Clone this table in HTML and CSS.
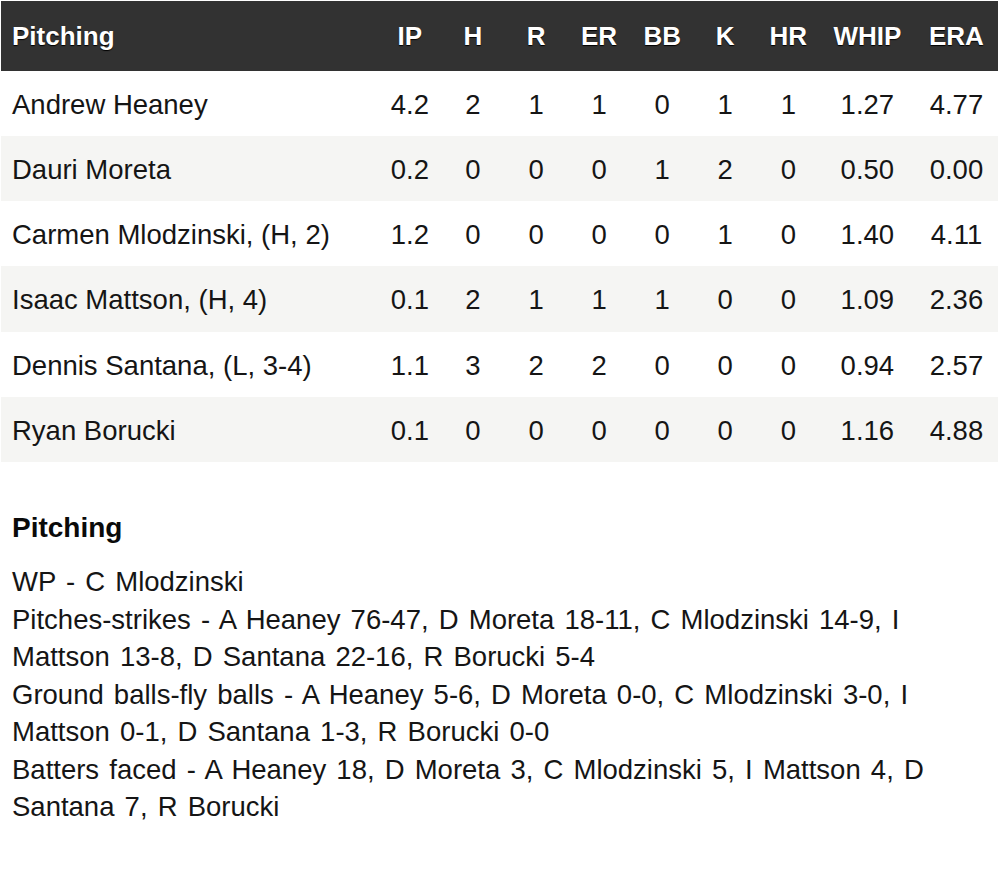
FILE: index.html
```html
<!DOCTYPE html>
<html>
<head>
<meta charset="utf-8">
<link rel="stylesheet" href="styles.css">
</head>
<body>
<div class="page">
  <table class="box">
    <colgroup>
      <col class="c-name"><col class="c-n"><col class="c-n"><col class="c-n"><col class="c-n"><col class="c-n"><col class="c-n"><col class="c-n"><col class="c-whip"><col class="c-era">
    </colgroup>
    <thead>
      <tr><th class="name">Pitching</th><th>IP</th><th>H</th><th>R</th><th>ER</th><th>BB</th><th>K</th><th>HR</th><th>WHIP</th><th>ERA</th></tr>
    </thead>
    <tbody>
      <tr><td class="name">Andrew Heaney</td><td>4.2</td><td>2</td><td>1</td><td>1</td><td>0</td><td>1</td><td>1</td><td>1.27</td><td>4.77</td></tr>
      <tr><td class="name">Dauri Moreta</td><td>0.2</td><td>0</td><td>0</td><td>0</td><td>1</td><td>2</td><td>0</td><td>0.50</td><td>0.00</td></tr>
      <tr><td class="name">Carmen Mlodzinski, (H, 2)</td><td>1.2</td><td>0</td><td>0</td><td>0</td><td>0</td><td>1</td><td>0</td><td>1.40</td><td>4.11</td></tr>
      <tr><td class="name">Isaac Mattson, (H, 4)</td><td>0.1</td><td>2</td><td>1</td><td>1</td><td>1</td><td>0</td><td>0</td><td>1.09</td><td>2.36</td></tr>
      <tr><td class="name">Dennis Santana, (L, 3-4)</td><td>1.1</td><td>3</td><td>2</td><td>2</td><td>0</td><td>0</td><td>0</td><td>0.94</td><td>2.57</td></tr>
      <tr><td class="name">Ryan Borucki</td><td>0.1</td><td>0</td><td>0</td><td>0</td><td>0</td><td>0</td><td>0</td><td>1.16</td><td>4.88</td></tr>
    </tbody>
  </table>
  <section class="notes">
    <h2 class="notes-title">Pitching</h2>
    <p class="notes-text">WP - C Mlodzinski<br>Pitches-strikes - A Heaney 76-47, D Moreta 18-11, C Mlodzinski 14-9, I Mattson 13-8, D Santana 22-16, R Borucki 5-4<br>Ground balls-fly balls - A Heaney 5-6, D Moreta 0-0, C Mlodzinski 3-0, I Mattson 0-1, D Santana 1-3, R Borucki 0-0<br>Batters faced - A Heaney 18, D Moreta 3, C Mlodzinski 5, I Mattson 4, D Santana 7, R Borucki</p>
  </section>
</div>
</body>
</html>
```

FILE: styles.css
```css
html, body {
  margin: 0;
  padding: 0;
  background: #ffffff;
}
body {
  font-family: "Liberation Sans", Arial, Helvetica, sans-serif;
  font-size: 27.5px;
  color: #151515;
}
.page {
  padding: 1px 2px 0 1px;
}
.box {
  width: 997px;
  border-collapse: collapse;
  table-layout: fixed;
}
.c-name { width: 377px; }
.c-n { width: 63px; }
.c-whip { width: 95px; }
.c-era { width: 83px; }
.box th {
  background: #323232;
  color: #ffffff;
  font-size: 26px;
  font-weight: bold;
  line-height: 30px;
  padding: 20px 0 19.5px 0;
  text-align: center;
  text-shadow: 0 1px 1px #000000;
}
.box td {
  line-height: 30px;
  padding: 19px 0 16.33px 0;
  height: 30px;
  text-align: center;
  white-space: nowrap;
}
.box th.name, .box td.name {
  text-align: left;
  padding-left: 11px;
}
.box tbody tr:nth-child(even) td {
  background: #f5f5f3;
}
.notes {
  padding: 0 12px 0 11px;
}
.notes-title {
  margin: 47px 0 16.5px 0;
  font-size: 28px;
  line-height: 37.5px;
  font-weight: bold;
  color: #0a0a0a;
}
.notes-text {
  margin: 0;
  line-height: 37.5px;
  word-spacing: 2.5px;
}
```
